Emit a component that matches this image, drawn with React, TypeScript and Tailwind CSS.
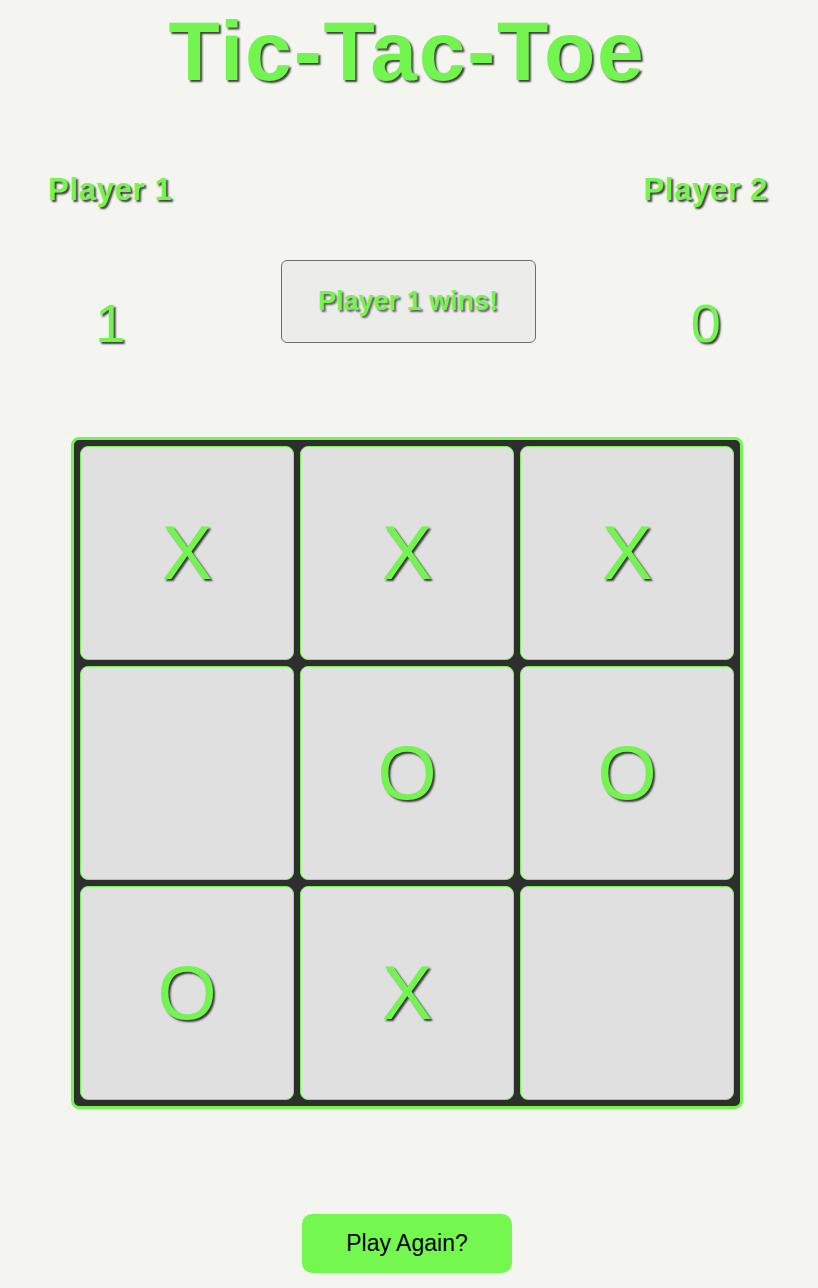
const board: string[] = ['X', 'X', 'X', '', 'O', 'O', 'O', 'X', ''];

const shadow = '[text-shadow:2px_2px_2px_rgba(0,0,0,0.75)]';

export default function App() {
  return (
    <div className="min-h-[1288px] w-full bg-[#f4f4f0] font-['Liberation_Sans',Arial,sans-serif]">
      <div className="w-[814px] flex flex-col items-center pt-[9px]">
        <h1 className={`text-[84px] leading-[84px] font-bold tracking-[1.8px] text-[#72f54f] ${shadow}`}>Tic-Tac-Toe</h1>

        <div className="w-full flex justify-between items-start pl-[48px] pr-[46px] mt-[81px]">
          <div className="flex flex-col items-center">
            <div className={`text-[31px] leading-[31px] font-bold tracking-[0.7px] text-[#72f54f] ${shadow}`}>Player 1</div>
            <div className={`mt-[91px] text-[54px] leading-[54px] text-[#72f54f] ${shadow}`}>1</div>
          </div>
          <div className="mt-[86px] w-[255px] h-[83px] flex items-center justify-center rounded-[6px] border border-[#6e6e6e] bg-[#ececea]">
            <span className={`text-[27px] font-bold text-[#72f54f] [text-shadow:2px_2px_2px_rgba(0,0,0,0.6)]`}>Player 1 wins!</span>
          </div>
          <div className="flex flex-col items-center">
            <div className={`text-[31px] leading-[31px] font-bold tracking-[0.7px] text-[#72f54f] ${shadow}`}>Player 2</div>
            <div className={`mt-[91px] text-[54px] leading-[54px] text-[#72f54f] ${shadow}`}>0</div>
          </div>
        </div>

        <div className="mt-[87px] w-[672px] rounded-[8px] border-[3px] border-[#72f54f] bg-[#2e2e2e] p-[6px] grid grid-cols-3 gap-[6px]">
          {board.map((v, i) => (
            <div
              key={i}
              className="h-[214px] rounded-[8px] border border-[#72f54f] bg-[#e0e0e0] flex items-center justify-center"
            >
              <span className={`text-[76px] leading-none text-[#72f54f] ${shadow}`}>{v}</span>
            </div>
          ))}
        </div>

        <button className="mt-[105px] w-[210px] h-[59px] rounded-[10px] bg-[#74f74f] text-[23px] text-black">
          Play Again?
        </button>
      </div>
    </div>
  );
}
